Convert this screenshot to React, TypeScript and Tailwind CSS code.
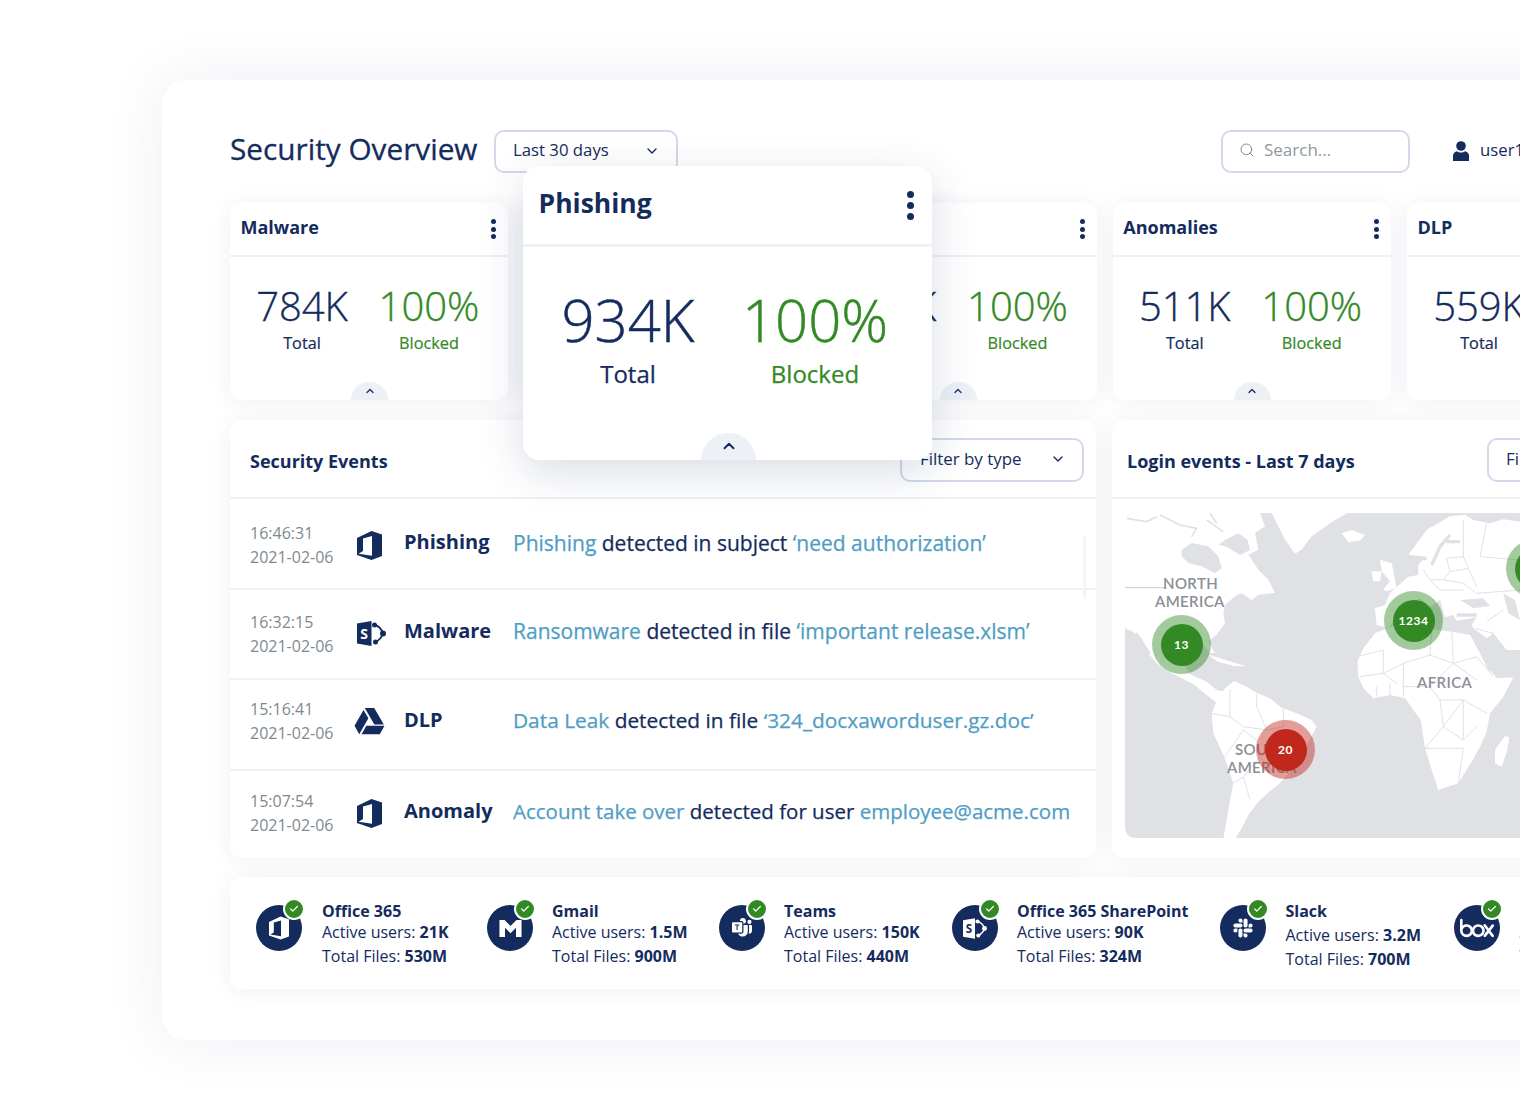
import React from 'react';
import { ChevronDown, ChevronUp, Search, Check } from 'lucide-react';
import { FaGoogleDrive, FaSlack } from 'react-icons/fa';
import { BsMicrosoftTeams } from 'react-icons/bs';
import { SiBox } from 'react-icons/si';

const OfficeIcon = ({ className }: { className?: string }) => (
  <svg viewBox="0 0 25 29" className={className} fill="currentColor">
    <path fillRule="evenodd" d="M0 7 14.500 0 25 3.500V25l-10.500 4L0 24V7Zm15-2L6 7.500V20l-4.500 2.700 13.500 2V5Z" />
  </svg>
);

const SharePointIcon = ({ className, letter }: { className?: string; letter: string }) => (
  <svg viewBox="0 0 29 25" className={className} fill="currentColor">
    <path d="M0 2.500 14.500 0v25L0 22.500V2.500Z" />
    <text x="7.200" y="17.500" textAnchor="middle" fontSize="14" fontWeight="700" className={letter}>S</text>
    <circle cx="17.500" cy="4" r="2.500" />
    <circle cx="26" cy="12.500" r="3" />
    <circle cx="18.500" cy="21" r="2.500" />
    <path d="M17.500 4c4 .8 7 4 8.500 8.500-1.500 4-4 7-7.500 8.500" fill="none" stroke="currentColor" strokeWidth="1.800" />
  </svg>
);

const GmailIcon = ({ className }: { className?: string }) => (
  <svg viewBox="0 0 26 20" className={className} fill="currentColor">
    <path d="M0 0h6l7 7 7-7h6v20h-6.500V9L13 15.500 6.500 9v11H0V0Z" />
  </svg>
);

const UserIcon = ({ className }: { className?: string }) => (
  <svg viewBox="0 0 16 20" className={className} fill="currentColor">
    <circle cx="8" cy="5" r="4.800" />
    <path d="M0 20v-5c0-3 2-4.500 4-4.800 1 .9 2.500 1.400 4 1.400s3-.5 4-1.400c2 .3 4 1.800 4 4.800v5H0Z" />
  </svg>
);

const Dots = ({ big }: { big?: boolean }) => (
  <div className={big ? 'flex flex-col gap-[4px]' : 'flex flex-col gap-[2.500px]'}>
    {[0, 1, 2].map((i) => (
      <span key={i} className={big ? 'h-[7px] w-[7px] rounded-full bg-[#142b5e]' : 'h-[5px] w-[5px] rounded-full bg-[#142b5e]'} />
    ))}
  </div>
);

const cards = [
  { title: 'Malware', total: '784K' },
  { title: '', total: '934K' },
  { title: '', total: '652K' },
  { title: 'Anomalies', total: '511K' },
  { title: 'DLP', total: '559K' },
];

function StatCard({ title, total }: { title: string; total: string }) {
  return (
    <div className="relative h-[197px] w-[278px] shrink-0 overflow-hidden rounded-[12px] bg-white shadow-[0_2px_22px_rgba(20,43,94,0.07)]">
      <div className="flex h-[54px] items-center justify-between border-b-2 border-[#f0f1f6] pl-[10.500px] pr-[12px]">
        <span className="pb-[3px] text-[18px] font-bold text-[#142b5e]">{title}</span>
        <Dots />
      </div>
      <div className="flex pl-[26px] pt-[24px]">
        <div className="flex w-[92px] flex-col items-center">
          <span className="whitespace-nowrap text-[40px] leading-[50px] font-light text-[#142b5e] [-webkit-text-stroke:0.350px]">{total}</span>
          <span className="text-[16.250px] leading-[24px] text-[#142b5e] [-webkit-text-stroke:0.200px]">Total</span>
        </div>
        <div className="ml-[32px] flex w-[98px] flex-col items-center">
          <span className="whitespace-nowrap text-[40px] leading-[50px] font-light text-[#338a25] [-webkit-text-stroke:0.350px]">100%</span>
          <span className="text-[16.250px] leading-[24px] text-[#338a25] [-webkit-text-stroke:0.200px]">Blocked</span>
        </div>
      </div>
      <div className="absolute bottom-0 left-[121px] flex h-[18px] w-[37px] items-start justify-center rounded-t-full bg-[#edf0f5] pt-[3px]">
        <ChevronUp className="h-[12px] w-[12px] text-[#142b5e]" strokeWidth={2.500} />
      </div>
    </div>
  );
}

function PhishingPopup() {
  return (
    <div className="absolute left-[361px] top-[86px] h-[294px] w-[409px] overflow-hidden rounded-[16px] bg-white shadow-[0_12px_44px_rgba(20,43,94,0.16)]">
      <div className="flex h-[81px] items-center justify-between border-b-[3px] border-[#f0f1f6] pl-[15.500px] pr-[18.500px]">
        <span className="pb-[3px] text-[26.500px] font-bold text-[#142b5e]">Phishing</span>
        <Dots big />
      </div>
      <div className="flex pl-[38px] pt-[37px]">
        <div className="flex w-[134px] flex-col items-center">
          <span className="whitespace-nowrap text-[58px] leading-[72px] font-light text-[#142b5e] [-webkit-text-stroke:0.500px]">934K</span>
          <span className="text-[24px] leading-[36px] text-[#142b5e] [-webkit-text-stroke:0.250px]">Total</span>
        </div>
        <div className="ml-[48px] flex w-[144px] flex-col items-center">
          <span className="whitespace-nowrap text-[58px] leading-[72px] font-light text-[#338a25] [-webkit-text-stroke:0.500px]">100%</span>
          <span className="text-[24px] leading-[36px] text-[#338a25] [-webkit-text-stroke:0.250px]">Blocked</span>
        </div>
      </div>
      <div className="absolute bottom-0 left-[178px] flex h-[27px] w-[55px] items-start justify-center rounded-t-full bg-[#edf0f5] pt-[4px]">
        <ChevronUp className="h-[18px] w-[18px] text-[#142b5e]" strokeWidth={2.500} />
      </div>
    </div>
  );
}

const events = [
  { time: '16:46:31', date: '2021-02-06', icon: <OfficeIcon className="h-[29px] w-[25px]" />, type: 'Phishing', lead: 'Phishing', mid: ' detected in subject ', tail: '‘need authorization’', pad: 'pt-[22px]', name: 'pt-[7px]', msg: 'pt-[7.500px] text-[21px]' },
  { time: '16:32:15', date: '2021-02-06', icon: <SharePointIcon letter="fill-white" className="h-[25px] w-[29px] translate-x-[2px]" />, type: 'Malware', lead: 'Ransomware', mid: ' detected in file ', tail: '‘important release.xlsm’', pad: 'pt-[20px]', name: 'pt-[7px]', msg: 'pt-[7.500px] text-[21px]' },
  { time: '15:16:41', date: '2021-02-06', icon: <FaGoogleDrive className="h-[30px] w-[31px]" />, type: 'DLP', lead: 'Data Leak', mid: ' detected in file ', tail: '‘324_docxaworduser.gz.doc’', pad: 'pt-[17px]', name: 'pt-[8.500px]', msg: 'pt-[8.500px] text-[20.850px]' },
  { time: '15:07:54', date: '2021-02-06', icon: <OfficeIcon className="h-[29px] w-[25px]" />, type: 'Anomaly', lead: 'Account take over', mid: ' detected for user ', tail: 'employee@acme.com', pad: 'pt-[18.500px]', name: 'pt-[7.500px]', msg: 'pt-[7.500px] text-[20.500px]' },
];

function EventsPanel() {
  return (
    <div className="relative h-[438px] w-[866px] shrink-0 overflow-hidden rounded-[12px] bg-white shadow-[0_2px_22px_rgba(20,43,94,0.07)]">
      <div className="flex h-[79px] items-center justify-between border-b-2 border-[#f0f1f6] pl-[20px] pr-[12px]">
        <span className="pt-[5px] text-[18px] font-bold text-[#142b5e]">Security Events</span>
        <div className="mt-[2px] flex h-[44px] w-[184px] items-center justify-between rounded-[10px] border-2 border-[#d3d9ea] pb-[2px] pl-[18px] pr-[16px]">
          <span className="text-[16.900px] text-[#142b5e]">Filter by type</span>
          <ChevronDown className="h-[16px] w-[16px] text-[#142b5e]" />
        </div>
      </div>
      {events.map((e, i) => (
        <div key={i} className={`flex h-[90.500px] border-b-2 border-[#f0f1f6] pl-[20px] last:border-b-0 ${e.pad}`}>
          <div className="w-[100px] text-[16px] leading-[24px] text-[#7e8a90]">
            <div>{e.time}</div>
            <div>{e.date}</div>
          </div>
          <div className="flex h-[48px] w-[38px] items-center justify-center text-[#142b5e]">{e.icon}</div>
          <div className={`ml-[16px] w-[109px] text-[20px] leading-[28px] font-bold text-[#142b5e] ${e.name}`}>{e.type}</div>
          <div className={`whitespace-nowrap leading-[28px] text-[#142b5e] [-webkit-text-stroke:0.250px] ${e.msg}`}>
            <span className="text-[#4f9dc4]">{e.lead}</span>
            {e.mid}
            <span className="text-[#4f9dc4]">{e.tail}</span>
          </div>
        </div>
      ))}
      <div className="absolute right-[10px] top-[115px] h-[64px] w-[3px] rounded-full bg-[#f3f5f8]" />
    </div>
  );
}

function Marker({ label, pos, ring, core }: { label: string; pos: string; ring: string; core: string }) {
  return (
    <div className={`absolute flex h-[59px] w-[59px] items-center justify-center rounded-full ${pos} ${ring}`}>
      <div className={`flex h-[42px] w-[42px] items-center justify-center rounded-full text-[12px] font-bold tracking-[0.5px] text-white [font-family:Lato,sans-serif] ${core}`}>{label}</div>
    </div>
  );
}

const mapLabel = 'absolute text-[15px] leading-[18px] font-semibold tracking-wide text-[#8b8e96] [font-family:Lato,sans-serif]';

function WorldMap() {
  return (
    <div className="relative ml-[13px] mt-[14px] h-[325px] w-[470px] overflow-hidden rounded-[10px] bg-[#dfe1e5]">
      <svg viewBox="45 39 1185 975" className="h-[325px] w-[395px]">
        <g fill="#ffffff">
          {/* north america */}
          <path d="M45 39H450L465 79 435 99 445 149 415 164 445 209 475 239 495 279 445 284 425 301 395 279 375 289 345 314 340 339 345 369 320 404 295 424 315 459 300 459 280 435 235 470 225 495 238 522 290 545 320 570 345 575 340 600 322 610 290 585 250 552 195 525 140 490 115 460 70 395 45 385Z" />
          {/* greenland */}
          <path d="M485 39H712L660 70 605 109 575 149 555 161 525 119 500 69Z" />
          {/* iceland, uk, ireland, madagascar, cuba */}
          <path d="M695 100 725 90 765 105 750 122 715 126Z" />
          <path d="M810 179 845 189 855 239 860 264 830 274 820 269 840 244 815 214Z" />
          <path d="M785 214 815 214 810 244 790 244Z" />
          <path d="M1185 708 1198 712 1192 750 1175 800 1155 790 1155 750Z" />
          <path d="M295 464 345 479 408 499 375 498 325 486Z" />
          {/* south america */}
          <path d="M305 640 325 590 345 565 372 543 410 560 440 578 480 595 512 622 560 640 605 660 620 680 595 725 580 770 545 810 510 850 478 875 445 905 415 945 395 985 375 1017 340 1017 348 970 360 900 370 850 345 775 310 700Z" />
          {/* africa */}
          <path d="M742 485 760 445 795 400 850 378 900 385 945 385 1025 395 1080 405 1105 450 1135 500 1160 535 1210 532 1180 590 1140 640 1130 695 1110 740 1085 785 1045 850 985 870 965 810 945 745 932 660 885 595 840 585 790 595 760 565 745 530Z" />
          {/* europe and asia */}
          <path d="M895 164 950 89 1020 49 1065 44 1090 60 1140 70 1180 58 1230 65V450H1190L1150 400 1130 415 1090 385 1085 375 1100 352 1040 362 1030 345 1005 352 990 300 960 320 930 295 880 320 860 350 835 385 800 375 795 325 825 315 840 279 895 230 925 225 925 195 945 170Z" />
        </g>
        <g fill="#dfe1e5">
          {/* hudson bay, strait */}
          <path d="M215 149 245 129 295 139 325 169 335 204 315 219 275 199 235 189 215 169Z" />
          <path d="M325 134 345 120 385 100 412 119 420 150 390 165 350 140Z" />
          {/* black sea, caspian, red sea */}
          <path d="M1050 300 1120 295 1140 318 1090 325Z" />
          <path d="M1180 280 1215 300 1230 360 1195 340Z" />
          <path d="M1090 420 1110 420 1150 520 1135 510Z" />
        </g>
        <g fill="none" stroke="#dfe1e5" strokeWidth="10">
          <path d="M965 195 990 140 1020 105" />
          <path d="M1010 125 1050 125" />
          <path d="M905 178 950 175" />
          <path d="M78 400 118 462" />
          <path d="M1040 345 1100 345" />
        </g>
        <g fill="none" stroke="#dfe1e5" strokeWidth="5">
          <path d="M50 55 110 65 140 50" />
          <path d="M150 45 210 75 260 85 245 110M290 60 340 95" />
          <path d="M300 40 320 70" />
        </g>
        <g fill="none" stroke="#dfe1e5" strokeWidth="3">
          <path d="M45 263H170" stroke="#c9ccd3" />
          <path d="M740 470 820 450 820 520 880 490 960 465 1030 490 1100 470M960 465 965 400M1030 490 1025 395M880 490 880 560 960 560 1030 490M880 560 880 590M960 560 990 600 1060 600 1130 640M990 600 1000 680 1060 720 1100 680M1000 680 945 745 1060 745 1045 850M1060 600 1060 720" />
          <path d="M750 530 820 520 860 550M800 590 800 560M840 590 840 550M1030 490 1100 540M1100 470 1150 530M1000 680 1060 600" />
          <path d="M305 640 360 650 400 680 470 690 520 680 520 620M360 570 360 650M440 580 440 620 470 690M345 770 400 690 440 720 450 770 400 830 370 850M450 770 500 830M400 830 420 900" />
          <path d="M940 210 960 240 1000 239 1060 250 1100 280M1000 239 1020 215 1075 205 1100 260M960 240 990 270 1060 270M1020 215 1010 175 1060 170 1075 205M1100 280 1230 270M1130 365 1180 330M1060 170 1060 60M1130 70 1110 170M1230 180 1110 170" />
          <path d="M1150 400 1170 440M1095 385 1150 400" />
        </g>
      </svg>
      <span className={`${mapLabel} left-[38px] top-[61px]`}>NORTH</span>
      <span className={`${mapLabel} left-[30px] top-[79px]`}>AMERICA</span>
      <span className={`${mapLabel} left-[292px] top-[160px]`}>AFRICA</span>
      <span className={`${mapLabel} left-[110px] top-[227px]`}>SOUTH</span>
      <span className={`${mapLabel} left-[102px] top-[245px]`}>AMERICA</span>
      <Marker label="13" pos="left-[27px] top-[102px]" ring="bg-[#338a25]/45" core="bg-[#338a25]" />
      <Marker label="1234" pos="left-[259px] top-[78px]" ring="bg-[#338a25]/45" core="bg-[#338a25]" />
      <Marker label="20" pos="left-[131px] top-[207px]" ring="bg-[#c0281c]/45" core="bg-[#c0281c]" />
      <Marker label="88" pos="left-[381px] top-[26px]" ring="bg-[#338a25]/45" core="bg-[#338a25]" />
    </div>
  );
}

function MapPanel() {
  return (
    <div className="h-[438px] w-[500px] shrink-0 overflow-hidden rounded-[12px] bg-white shadow-[0_2px_22px_rgba(20,43,94,0.07)]">
      <div className="flex h-[79px] items-center justify-between border-b-2 border-[#f0f1f6] pl-[15px] pr-[12px]">
        <span className="pt-[5px] text-[18px] font-bold text-[#142b5e]">Login events - Last 7 days</span>
        <div className="mt-[2px] flex h-[44px] w-[113px] items-center rounded-[10px] border-2 border-[#d3d9ea] pb-[2px] pl-[17px]">
          <span className="text-[16.900px] text-[#142b5e]">Filter</span>
        </div>
      </div>
      <WorldMap />
    </div>
  );
}

const apps = [
  { name: 'Office 365', users: '21K', files: '530M', w: 'w-[231px]', ml: 'ml-[20px]', gap: '', icon: <OfficeIcon className="h-[24px] w-[20px] text-white" /> },
  { name: 'Gmail', users: '1.5M', files: '900M', w: 'w-[232px]', ml: 'ml-[19px]', gap: '', icon: <GmailIcon className="h-[17px] w-[25px] text-white" /> },
  { name: 'Teams', users: '150K', files: '440M', w: 'w-[233px]', ml: 'ml-[19px]', gap: '', icon: <BsMicrosoftTeams className="h-[20px] w-[20px] text-white" /> },
  { name: 'Office 365 SharePoint', users: '90K', files: '324M', w: 'w-[268px]', ml: 'ml-[19px]', gap: '', icon: <SharePointIcon letter="fill-[#142b5e]" className="h-[21px] w-[24px] text-white" /> },
  { name: 'Slack', users: '3.2M', files: '700M', w: 'w-[234px]', ml: 'ml-[19.500px]', gap: 'pt-[3px]', icon: <FaSlack className="h-[22px] w-[22px] text-white" /> },
  { name: 'Box', users: '1.1M', files: '210M', w: 'w-[240px]', ml: 'ml-[19.500px]', gap: '', icon: <SiBox className="h-[34px] w-[34px] text-white" /> },
];

function AppsStrip() {
  return (
    <div className="mt-[19px] flex h-[112px] w-[1400px] items-start overflow-hidden rounded-[12px] bg-white pl-[26px] pt-[23px] shadow-[0_2px_22px_rgba(20,43,94,0.07)]">
      {apps.map((a) => (
        <div key={a.name} className={`flex shrink-0 ${a.w}`}>
          <div className="relative mt-[5px] flex h-[46px] w-[46px] shrink-0 items-center justify-center rounded-full bg-[#142b5e]">
            {a.icon}
            <div className="absolute -right-[3px] -top-[7px] flex h-[22px] w-[22px] items-center justify-center rounded-full border-2 border-white bg-[#338a25]">
              <Check className="h-[10px] w-[10px] text-white" strokeWidth={3} />
            </div>
          </div>
          <div className={`whitespace-nowrap text-[16px] text-[#142b5e] ${a.ml}`}>
            <div className="text-[16px] leading-[22px] font-bold">{a.name}</div>
            <div className={a.gap}>
              <div className="leading-[20px]">Active users: <b className="font-bold">{a.users}</b></div>
              <div className="mt-[2px] leading-[24px]">Total Files: <b className="font-bold">{a.files}</b></div>
            </div>
          </div>
        </div>
      ))}
    </div>
  );
}

export default function App() {
  return (
    <div className="h-[1120px] w-[1520px] overflow-hidden bg-white pl-[162px] pt-[80px] [font-family:'Open_Sans',sans-serif]">
      <div className="relative h-[960px] w-[1500px] rounded-[24px] bg-white pl-[68px] pt-[50px] shadow-[0_0_60px_rgba(20,43,94,0.08)]">
        <div className="flex h-[43px] items-center">
          <h1 className="w-[264px] pb-[5px] text-[29.750px] leading-[40px] text-[#142b5e] [-webkit-text-stroke:0.300px]">Security Overview</h1>
          <div className="flex h-[43px] w-[184px] items-center justify-between rounded-[10px] border-2 border-[#d3d9ea] pb-[3px] pl-[17px] pr-[16px]">
            <span className="text-[16.750px] text-[#142b5e]">Last 30 days</span>
            <ChevronDown className="mt-[2px] h-[16px] w-[16px] text-[#142b5e]" />
          </div>
          <div className="ml-[543px] flex h-[43px] w-[189px] items-center rounded-[10px] border-2 border-[#d3d9ea] pb-[3px] pl-[16px]">
            <Search className="h-[16px] w-[16px] text-[#7e8a90]" strokeWidth={1.500} />
            <span className="ml-[9px] text-[17px] text-[#8f989d]">Search...</span>
          </div>
          <UserIcon className="ml-[43px] h-[20px] w-[16px] -translate-y-[1px] text-[#142b5e]" />
          <span className="ml-[11px] whitespace-nowrap pb-[3px] text-[16.750px] text-[#142b5e]">user1@acme.com</span>
        </div>
        <div className="mt-[30px] flex gap-[16.250px]">
          {cards.map((c) => (
            <StatCard key={c.total} title={c.title} total={c.total} />
          ))}
        </div>
        <div className="mt-[20px] flex gap-[16px]">
          <EventsPanel />
          <MapPanel />
        </div>
        <AppsStrip />
        <PhishingPopup />
      </div>
    </div>
  );
}
